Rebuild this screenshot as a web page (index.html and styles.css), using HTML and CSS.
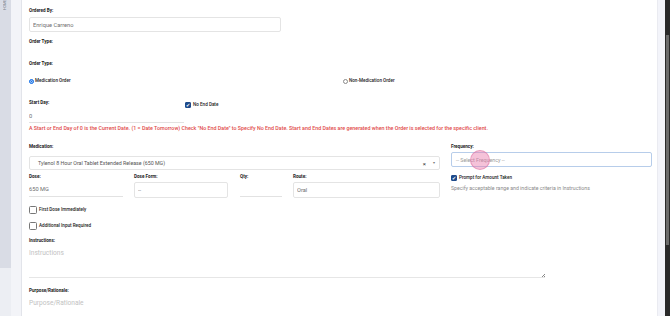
FILE: index.html
```html
<!DOCTYPE html>
<html lang="en">
<head>
    <meta charset="UTF-8">
    <meta name="viewport" content="width=device-width, initial-scale=1.0">
    <title>New Order</title>
    <link rel="stylesheet" href="styles.css">
</head>
<body>
    <div class="app">
        <div class="sidebar">
            <div class="sidebar-top"><span class="side-label">HOME</span></div>
            <div class="sidebar-bottom"></div>
        </div>
        <div class="rail"></div>

        <div class="main">
            <div class="label">Ordered By:</div>
            <input class="box ordered" type="text" value="Enrique Carreno" readonly>

            <div class="label gap-7">Order Type:</div>
            <div class="label gap-16">Order Type:</div>

            <div class="radios">
                <div class="option"><span class="radio on"></span>Medication Order</div>
                <div class="option"><span class="radio"></span>Non-Medication Order</div>
            </div>

            <div class="start-row">
                <div class="start-col">
                    <div class="label">Start Day:</div>
                    <input class="line start-input" type="text" value="0" readonly>
                </div>
                <div class="option check-opt"><span class="check on">&#10004;</span>No End Date</div>
            </div>

            <div class="warning">A Start or End Day of 0 is the Current Date. (1 = Date Tomorrow) Check "No End Date" to Specify No End Date. Start and End Dates are generated when the Order is selected for the specific client.</div>

            <div class="med-grid">
                <div class="med-left">
                    <div class="label">Medication:</div>
                    <div class="box select med-select">
                        <span class="select-text">Tylenol 8 Hour Oral Tablet Extended Release (650 MG)</span>
                        <span class="clear">&times;</span>
                        <span class="caret">&#9662;</span>
                    </div>

                    <div class="dose-row">
                        <div class="dose-col dose">
                            <div class="label">Dose:</div>
                            <input class="line" type="text" value="650 MG" readonly>
                        </div>
                        <div class="dose-col form">
                            <div class="label">Dose Form:</div>
                            <input class="box" type="text" value="--" readonly>
                        </div>
                        <div class="dose-col qty">
                            <div class="label">Qty:</div>
                            <input class="line" type="text" value="" readonly>
                        </div>
                        <div class="dose-col route">
                            <div class="label">Route:</div>
                            <input class="box" type="text" value="Oral" readonly>
                        </div>
                    </div>
                </div>

                <div class="med-right">
                    <div class="label">Frequency:</div>
                    <div class="box select freq-select">
                        <span class="placeholder">-- Select Frequency --</span>
                        <span class="tap"></span>
                    </div>
                    <div class="option prompt"><span class="check on">&#10004;</span>Prompt for Amount Taken</div>
                    <div class="hint">Specify acceptable range and indicate criteria in Instructions</div>
                </div>
            </div>

            <div class="option big-check first"><span class="check"></span>First Dose Immediately</div>
            <div class="option big-check second"><span class="check"></span>Additional Input Required</div>

            <div class="label gap-8">Instructions:</div>
            <div class="notes-wrap">
                <textarea class="notes" placeholder="Instructions"></textarea>
            </div>

            <div class="label gap-10">Purpose/Rationale:</div>
            <textarea class="notes purpose" placeholder="Purpose/Rationale"></textarea>
        </div>

        <div class="gutter"></div>
        <div class="scroll"><div class="thumb"></div></div>
    </div>
</body>
</html>
```

FILE: styles.css
```css
html,
body {
    margin: 0;
    padding: 0;
    height: 316px;
    overflow: hidden;
    font-family: 'Roboto', sans-serif;
    color: #1f1f1f;
    background: #ffffff;
}

.app {
    display: flex;
    height: 316px;
}

/* left navigation strip */
.sidebar {
    width: 11px;
    display: flex;
    flex-direction: column;
}

.sidebar-top {
    height: 268px;
    background: #d9dce5;
}

.sidebar-bottom {
    flex: 1;
    background: #eceef3;
}

.side-label {
    display: block;
    writing-mode: vertical-rl;
    transform: rotate(180deg);
    font-size: 3.6px;
    color: #7c7f88;
    margin: 0 0 0 3px;
    height: 10px;
}

.rail {
    width: 10px;
    background: #f3f4f8;
    border-right: 1px solid #e2e4ea;
}

/* form area */
.main {
    flex: 1;
    padding: 8px 5px 0 7px;
    background: #ffffff;
}

.label {
    font-size: 4.6px;
    font-weight: 700;
    line-height: 6px;
    color: #222222;
}

.gap-7 { margin-top: 7px; }
.gap-8 { margin-top: 8px; }
.gap-10 { margin-top: 10px; }
.gap-16 { margin-top: 16px; }

input {
    display: block;
    box-sizing: border-box;
    width: 100%;
    margin: 0;
    font-family: 'Roboto', sans-serif;
    font-size: 5.7px;
    color: #6f6f6f;
    background: #ffffff;
    outline: none;
}

.box {
    box-sizing: border-box;
    border: 1px solid #e4e4e4;
    border-radius: 2px;
    padding: 0 3px;
}

.line {
    border: none;
    border-bottom: 1px solid #e2e2e2;
    padding: 0;
}

.ordered {
    margin-top: 3px;
    width: 252px;
    height: 15px;
}

.radios {
    display: grid;
    grid-template-columns: 314px 1fr;
    margin-top: 11px;
    height: 6px;
}

.option {
    display: flex;
    align-items: center;
    gap: 1px;
    font-size: 4.6px;
    font-weight: 500;
    line-height: 6px;
    color: #222222;
}

.radio {
    box-sizing: border-box;
    width: 5px;
    height: 5px;
    border-radius: 50%;
    border: 0.6px solid #8a8a8a;
    background: #ffffff;
}

.radio.on {
    border: 0.6px solid #1a73e8;
    background: #1a73e8;
    box-shadow: inset 0 0 0 0.5px #ffffff;
}

.start-row {
    display: flex;
    align-items: flex-start;
    margin-top: 16px;
}

.start-col {
    width: 155px;
}

.start-input {
    margin-top: 3px;
    height: 14px;
}

.check-opt {
    margin: 2px 0 0 1px;
}

.check {
    box-sizing: border-box;
    width: 6px;
    height: 6px;
    border-radius: 1px;
    border: 0.7px solid #6d6d6d;
    background: #ffffff;
    color: #ffffff;
    font-size: 4.6px;
    line-height: 6px;
    text-align: center;
    margin-right: 1px;
}

.check.on {
    border-color: #1f4a8a;
    background: #1f4a8a;
}

.warning {
    margin-top: 2px;
    font-size: 5.33px;
    font-weight: 500;
    line-height: 6px;
    color: #e14a4a;
    white-space: nowrap;
}

.med-grid {
    display: grid;
    grid-template-columns: 411px 201px;
    column-gap: 11px;
    margin-top: 13px;
}

.select {
    display: flex;
    align-items: center;
    font-size: 5.3px;
    color: #555555;
}

.med-select {
    margin-top: 6px;
    height: 14px;
    padding: 0 4px 0 8px;
}

.select-text {
    flex: 1;
}

.clear {
    font-size: 6px;
    color: #333333;
    margin-right: 7px;
}

.caret {
    font-size: 3.6px;
    color: #777777;
}

.dose-row {
    display: flex;
    margin-top: 4px;
}

.dose-col input {
    margin-top: 2px;
    height: 16px;
}

.dose-col .line {
    height: 15px;
}

.dose { width: 94px; margin-right: 11px; }
.form { width: 94px; margin-right: 12px; }
.qty { width: 42px; margin-right: 11px; }
.route { width: 147px; }

.freq-select {
    position: relative;
    margin-top: 2px;
    height: 15px;
    border-color: #b7cdea;
    padding: 0 4px;
}

.placeholder {
    color: #9a9a9a;
}

.tap {
    position: absolute;
    left: 18px;
    top: -3px;
    width: 20px;
    height: 20px;
    border-radius: 50%;
    background: rgba(232, 120, 170, 0.45);
    border: 1px solid rgba(220, 110, 160, 0.5);
    box-sizing: border-box;
}

.prompt {
    margin-top: 8px;
}

.hint {
    margin-top: 4px;
    font-size: 5.2px;
    line-height: 6px;
    color: #8a8a8a;
}

.big-check .check {
    width: 8px;
    height: 8px;
    border-radius: 1.5px;
    border: 0.8px solid #777777;
}

.big-check {
    line-height: 8px;
}

.first { margin-top: 8px; }
.second { margin-top: 8px; }

.notes-wrap {
    position: relative;
    width: 516px;
}

/* small resize grip in the corner */
.notes-wrap::after {
    content: "";
    position: absolute;
    right: 0;
    bottom: 1px;
    width: 3px;
    height: 3px;
    background: linear-gradient(135deg, transparent 45%, #888888 45%, #888888 60%, transparent 60%, transparent 75%, #888888 75%);
}

.notes {
    display: block;
    box-sizing: border-box;
    width: 516px;
    height: 33px;
    margin: 1px 0 0 0;
    padding: 4px 0 0 0;
    border: none;
    border-bottom: 1px solid #e6e6e6;
    font-family: 'Roboto', sans-serif;
    font-size: 6.6px;
    line-height: 8px;
    outline: none;
    resize: none;
}

.notes::placeholder {
    color: #c2c2c2;
}

.purpose {
    border-bottom: none;
}

/* right edge */
.gutter {
    width: 8px;
    background: #f3f4fa;
    border-left: 1px solid #eaebf1;
    box-sizing: border-box;
}

.scroll {
    width: 5px;
    background: #2a2a2a;
    padding-top: 35px;
    box-sizing: border-box;
}

.thumb {
    width: 3px;
    height: 210px;
    margin-left: 1px;
    background: #6b6b6b;
}
```
